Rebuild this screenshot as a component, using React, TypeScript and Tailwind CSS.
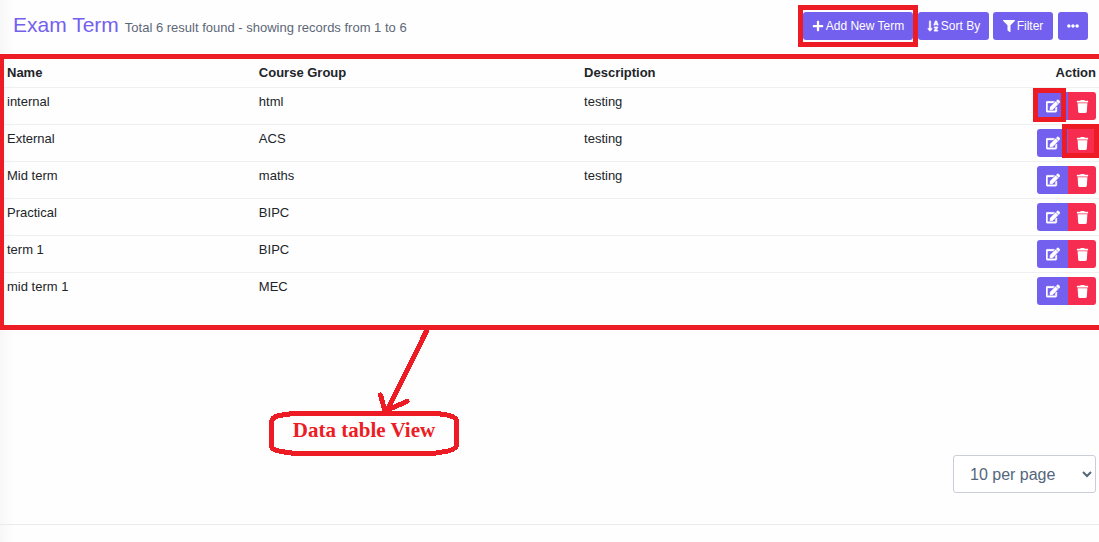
import {FaEdit, FaEllipsisH, FaFilter, FaPlus, FaSortAlphaDown, FaTrash} from 'react-icons/fa';

type ExamTerm = { name: string; courseGroup: string; description: string };

const terms: ExamTerm[] = [
    {name: 'internal', courseGroup: 'html', description: 'testing'},
    {name: 'External', courseGroup: 'ACS', description: 'testing'},
    {name: 'Mid term', courseGroup: 'maths', description: 'testing'},
    {name: 'Practical', courseGroup: 'BIPC', description: ''},
    {name: 'term 1', courseGroup: 'BIPC', description: ''},
    {name: 'mid term 1', courseGroup: 'MEC', description: ''},
];

const toolbarButton = 'flex h-7 items-center gap-0.5 rounded-[3px] bg-[#7460ee] text-[12px] text-white';

const PageHeader = () => (
    <header className="flex h-[54px] items-start justify-between pl-[13px] pr-[11px] pt-3">
        <h1 className="flex items-baseline gap-[6px] text-[21px] leading-[26px] text-[#7460ee]">
            Exam Term
            <small className="text-[13px] text-[#5d6778]">Total 6 result found - showing records from 1 to 6</small>
        </h1>
        <div className="flex gap-1">
            <div className="relative mr-px">
                <button type="button" className={`${toolbarButton} w-[110px] justify-center`}>
                    <FaPlus className="size-3"/>Add New Term
                </button>
                <span className="pointer-events-none absolute -inset-x-[5px] -inset-y-[7px] border-[5px] border-[#ed1c24]"/>
            </div>
            <button type="button" className={`${toolbarButton} w-[71px] justify-center`}>
                <FaSortAlphaDown className="size-3" stroke="currentColor" strokeWidth="18"/>Sort By
            </button>
            <button type="button" className={`${toolbarButton} w-[60px] justify-center`}>
                <FaFilter className="size-3"/>Filter
            </button>
            <button type="button" aria-label="More" className={`${toolbarButton} ml-px w-[30px] justify-center`}>
                <FaEllipsisH className="size-3"/>
            </button>
        </div>
    </header>
);

const RowActions = ({index}: { index: number }) => (
    <div className="relative flex justify-end">
        <button type="button" aria-label="Edit"
                className="flex h-7 w-[31px] items-center justify-center rounded-l-[3px] bg-[#7460ee] text-white">
            <FaEdit className="size-[14px]" stroke="currentColor" strokeWidth="16"/>
        </button>
        <button type="button" aria-label="Delete"
                className="flex h-7 w-7 items-center justify-center rounded-r-[3px] bg-[#f62d51] text-white">
            <FaTrash className="size-[13px]"/>
        </button>
        {index === 0 &&
            <span className="pointer-events-none absolute -top-1 right-[30px] h-[34px] w-[33px] border-[5px] border-[#ed1c24]"/>}
        {index === 1 &&
            <span className="pointer-events-none absolute -top-[5px] -right-[3px] h-[34px] w-[37px] border-[5px] border-[#ed1c24]"/>}
    </div>
);

const TermTable = () => (
    <div className="border-y-[5px] border-l-4 border-[#ed1c24] pb-4">
        <table className="w-full table-fixed border-collapse text-[13px] leading-5 text-[#212529]">
            <thead>
            <tr className="h-7 text-left">
                <th className="w-[23%] px-[3px] py-1">Name</th>
                <th className="w-[29.7%] px-[3px] py-1">Course Group</th>
                <th className="px-[3px] py-1">Description</th>
                <th className="w-[100px] px-[3px] py-1 text-right">Action</th>
            </tr>
            </thead>
            <tbody>
            {terms.map((term, index) => (
                <tr key={term.name} className="border-t border-[#eeeff1] align-top">
                    <td className="px-[3px] py-1">{term.name}</td>
                    <td className="px-[3px] py-1">{term.courseGroup}</td>
                    <td className="px-[3px] py-1">{term.description}</td>
                    <td className="px-[3px] py-1"><RowActions index={index}/></td>
                </tr>
            ))}
            </tbody>
        </table>
    </div>
);

const Callout = () => (
    <div className="pointer-events-none absolute left-[264px] top-0 h-[130px] w-[200px] text-[#ed1c24]">
        <svg viewBox="0 0 200 130" className="h-full w-full" fill="none" stroke="currentColor" strokeWidth="5"
             strokeLinecap="round" strokeLinejoin="round" shapeRendering="crispEdges">
            <path d="M163 0 L123 81 M116.5 65 L121 81 L143 71.5"/>
            <path d="M29 83.5 H173 L183 85 Q192.5 87 192.5 91 V115 Q192 119 184 121 L169 123.5 H31 L17 121.5 Q7.500 120 7.500 116 V92 Q8 87 15 85.500 Z"/>
        </svg>
        <span className="absolute inset-x-0 top-[88px] text-center font-['Liberation_Serif',serif] text-[21px] font-bold leading-6">
            Data table View
        </span>
    </div>
);

export default function App() {
    return (
        <main className="min-h-screen bg-linear-to-r from-[#f7f7f7] to-[#fefefe] to-[14px] font-['Liberation_Sans',Arial,sans-serif]">
            <PageHeader/>
            <TermTable/>
            <div className="relative flex justify-end border-b border-[#e9ebee] pb-[31px] pr-[3px] pt-[125px]">
                <Callout/>
                <select aria-label="Records per page" defaultValue="10"
                        className="h-[38px] w-[143px] rounded-[3px] border border-[#c9ced9] bg-white pl-3 pr-1 text-[16px] text-[#54667a]">
                    <option value="10">10 per page</option>
                    <option value="25">25 per page</option>
                    <option value="50">50 per page</option>
                </select>
            </div>
        </main>
    );
}
